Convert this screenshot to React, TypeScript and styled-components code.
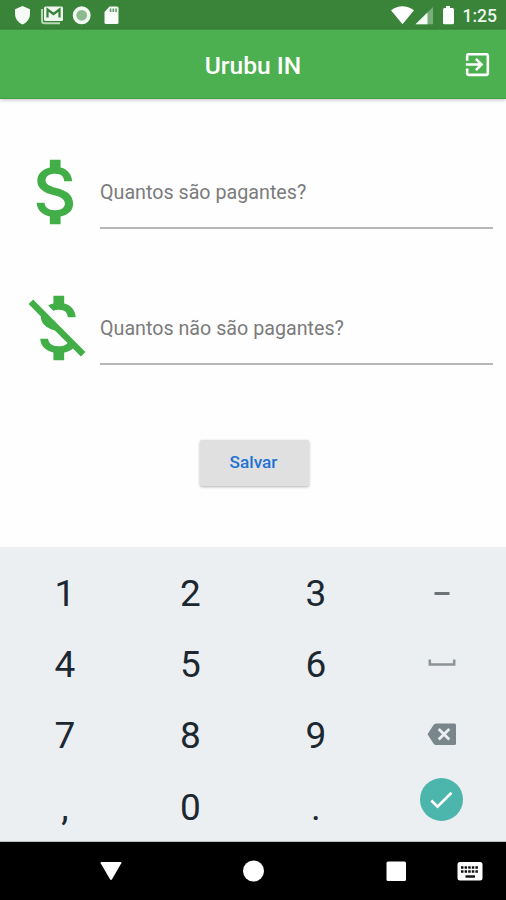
import React from 'react';
import styled, { createGlobalStyle } from 'styled-components';

const Global = createGlobalStyle`
  * { box-sizing: border-box; }
  body { margin: 0; background: #fff; }
  svg { display: block; flex: none; }
`;

const Screen = styled.div`
  width: 506px;
  height: 900px;
  display: flex;
  flex-direction: column;
  overflow: hidden;
  background: #fefefe;
  font-family: Roboto, sans-serif;
`;

const StatusBar = styled.div`
  flex: none;
  height: 30px;
  padding: 0 9px 0 14px;
  display: flex;
  align-items: center;
  justify-content: space-between;
  background: #398439;
  border-bottom: 1px solid #429746;
`;

const StatusRight = styled.div`
  display: flex;
  align-items: center;
  gap: 4px;
`;

const Clock = styled.span`
  padding-top: 2px;
  font-size: 17.5px;
  font-weight: 500;
  line-height: 30px;
  color: #eef6ee;
`;

const AppBar = styled.header`
  flex: none;
  position: relative;
  height: 69px;
  padding: 1px 13px 0 15px;
  display: grid;
  grid-template-columns: 31px 1fr 31px;
  align-items: center;
  background: #4caf50;
  border-bottom: 1px solid #40a045;
  box-shadow: 0 1px 4px rgba(0, 0, 0, 0.24);
`;

const Title = styled.h1`
  grid-column: 2;
  margin: 2px 2px 0 0;
  text-align: center;
  font-size: 24.6px;
  font-weight: 500;
  line-height: 30px;
  color: #fff;
`;

const Form = styled.main`
  flex: none;
  height: 448px;
  padding: 50px 13px 0 14px;
  display: flex;
  flex-direction: column;
`;

const Field = styled.label`
  height: 86px;
  margin-bottom: 49.5px;
  display: flex;
  align-items: flex-start;
`;

const Line = styled.span`
  flex: 1;
  height: 80px;
  padding-top: 29px;
  border-bottom: 2px solid #b7b7b7;
  font-size: 19.7px;
  line-height: 30px;
  color: #7b7b7b;
`;

const SaveButton = styled.button`
  align-self: center;
  width: 109px;
  height: 46px;
  margin: 20px 0 0 1px;
  padding: 0 1px 2px 0;
  border: 0;
  border-radius: 2px;
  background: #e0e0e0;
  box-shadow: 0 1px 3px rgba(0, 0, 0, 0.3);
  font: 500 17.2px/44px Roboto, sans-serif;
  color: #2272d3;
`;

const Keyboard = styled.div`
  flex: none;
  height: 295px;
  padding: 11px 1px 0 2px;
  display: grid;
  grid-template-columns: repeat(4, 125.6px);
  grid-template-rows: repeat(4, 71.2px);
  background: #eceff1;
  border-bottom: 1px solid #b9bcbd;
`;

const Key = styled.div`
  display: flex;
  align-items: center;
  justify-content: center;
  font-size: 37px;
  font-weight: 400;
  line-height: 71px;
  color: #1b2831;
`;

const Enter = styled.div`
  width: 43px;
  height: 43px;
  margin-bottom: 15px;
  border-radius: 50%;
  display: flex;
  align-items: center;
  justify-content: center;
  background: #4db6ac;
`;

const NavBar = styled.nav`
  flex: 1;
  display: flex;
  background: #000;
`;

const StatusIcons = () => (
  <svg width="108" height="30" viewBox="14 0 108 30">
    <path fill="#f6fbf6" d="M22.500 6 30 9.200V14q0 7-7.500 10.500Q15 21 15 14V9.200z" />
    <path fill="none" stroke="#b9d6b9" strokeWidth="2" d="M42 9v12q0 2.300 2.500 2.300H60" />
    <rect x="44" y="6.500" width="19" height="14.500" rx="1.500" fill="#edf6ed" />
    <path fill="none" stroke="#39813b" strokeWidth="2.200" d="M47.500 17.500v-8l6 4.500 6-4.500v8" />
    <circle cx="81.700" cy="15.300" r="7.200" fill="#8dbb8e" stroke="#f2f8f2" strokeWidth="3.600" />
    <path fill="#fafdfa" d="M109.500 6.500h7.500q1.500 0 1.500 1.500v14.500q0 1.500-1.500 1.500h-11q-1.500 0-1.500-1.500V12z" />
    <path stroke="#659e66" strokeWidth="1.700" d="M110.600 8.500v3.500M113.300 8.500v3.500M116 8.500v3.500" />
  </svg>
);

const SignalIcons = () => (
  <svg width="70" height="30" viewBox="388.500 0 70 30">
    <path fill="#fff" d="M390.500 10.300Q402 2.300 413.500 10.300L402 24.300z" />
    <path fill="#79ad7a" d="M432.500 7v17.300H415z" />
    <path fill="#f4faf4" d="M427 12.500v11.800H415z" />
    <path fill="#fff" d="M445.500 6h4v2h2.500q1.500 0 1.500 1.500v13.300q0 1.500-1.500 1.500h-8q-1.500 0-1.500-1.500V9.500q0-1.500 1.500-1.500h1.500z" />
  </svg>
);

const ExitIcon = () => (
  <svg width="31" height="31" viewBox="0 0 24 24" fill="#fff">
    <path d="M10.090 15.590L11.500 17l5-5-5-5-1.410 1.410L12.670 11H3v2h9.670l-2.580 2.590zM19 3H5c-1.110 0-2 .9-2 2v4h2V5h14v14H5v-4H3v4c0 1.100.89 2 2 2h14c1.100 0 2-.9 2-2V5c0-1.100-.9-2-2-2z" />
  </svg>
);

const MoneyIcon = () => (
  <svg width="86" height="86" viewBox="0 0 24 24" fill="#41ae48">
    <path d="M11.800 10.900c-2.270-.59-3-1.200-3-2.150 0-1.090 1.010-1.850 2.700-1.850 1.780 0 2.440.85 2.500 2.100h2.210c-.07-1.720-1.120-3.300-3.210-3.810V3h-3v2.160c-1.940.42-3.500 1.680-3.500 3.610 0 2.310 1.910 3.460 4.700 4.130 2.500.6 3 1.480 3 2.410 0 .69-.49 1.790-2.700 1.790-2.060 0-2.870-.92-2.980-2.100h-2.200c.12 2.190 1.760 3.420 3.680 3.830V21h3v-2.150c1.950-.37 3.500-1.500 3.500-3.550 0-2.840-2.430-3.810-4.700-4.400z" />
  </svg>
);

const MoneyOffIcon = () => (
  <svg width="86" height="86" viewBox="0 0 24 24" fill="#41ae48">
    <path d="M12.500 6.900c1.780 0 2.440.85 2.500 2.100h2.210c-.07-1.720-1.120-3.300-3.210-3.810V3h-3v2.160c-.53.12-1.030.3-1.480.54l1.470 1.470c.41-.17.91-.27 1.510-.27zM5.330 4.060L4.060 5.330 7.500 8.770c0 2.080 1.560 3.210 3.910 3.910l3.510 3.510c-.34.48-1.050.91-2.420.91-2.060 0-2.870-.92-2.980-2.100h-2.200c.12 2.190 1.760 3.420 3.680 3.830V21h3v-2.150c.96-.18 1.820-.55 2.450-1.120l2.220 2.220 1.270-1.270L5.330 4.060z" />
  </svg>
);

const MinusIcon = () => (
  <svg width="30" height="30" viewBox="0 0 30 30">
    <path stroke="#6c7477" strokeWidth="3" d="M7.500 14.500h15" />
  </svg>
);

const SpaceIcon = () => (
  <svg width="30" height="30" viewBox="0 0 30 30">
    <path fill="none" stroke="#8b9396" strokeWidth="2.500" d="M2.800 9.500v5h24.400v-5" />
  </svg>
);

const BackspaceIcon = () => (
  <svg width="30" height="28" viewBox="0 0 30 28">
    <path fill="#79868c" d="M9 1.500h18.500q1.500 0 1.500 1.500v18.500q0 1.500-1.500 1.500H9q-1.500 0-2.500-1.500L.500 12.300l6-9.300Q7.500 1.500 9 1.500z" />
    <path stroke="#eceff1" strokeWidth="2.800" d="M11.700 7l10.600 10.600M22.300 7L11.700 17.600" />
  </svg>
);

const CheckIcon = () => (
  <svg width="43" height="43" viewBox="0 0 43 43">
    <path fill="none" stroke="#fff" strokeWidth="2.700" d="M11.300 22.500l6.200 6.200L31.500 14.800" />
  </svg>
);

const NavIcons = () => (
  <svg width="506" height="58" viewBox="0 842 506 58" fill="#fff">
    <path d="M101.500 862h19q1.500 0 .8 1.300l-9.300 16q-1 1.500-2 0l-9.300-16q-.7-1.300.8-1.300z" />
    <circle cx="253.500" cy="871" r="10.500" />
    <rect x="386.500" y="861.500" width="19.500" height="19.500" rx="1.500" />
    <rect x="457.500" y="862" width="25" height="18.500" rx="2.500" />
    <path stroke="#111" strokeWidth="2.400" strokeDasharray="2.500 1.100" d="M461 867.500h18M461 871.500h18" />
    <path stroke="#111" strokeWidth="2.400" d="M465.500 876.500h9.500" />
  </svg>
);

const keys: React.ReactNode[] = [
  '1', '2', '3', <MinusIcon />,
  '4', '5', '6', <SpaceIcon />,
  '7', '8', '9', <BackspaceIcon />,
  ',', '0', '.', <Enter><CheckIcon /></Enter>,
];

export default function App() {
  return (
    <>
      <Global />
      <Screen>
        <StatusBar>
          <StatusIcons />
          <StatusRight>
            <SignalIcons />
            <Clock>1:25</Clock>
          </StatusRight>
        </StatusBar>
        <AppBar>
          <Title>Urubu IN</Title>
          <ExitIcon />
        </AppBar>
        <Form>
          <Field>
            <MoneyIcon />
            <Line>Quantos são pagantes?</Line>
          </Field>
          <Field>
            <MoneyOffIcon />
            <Line>Quantos não são pagantes?</Line>
          </Field>
          <SaveButton>Salvar</SaveButton>
        </Form>
        <Keyboard>
          {keys.map((key, i) => <Key key={i}>{key}</Key>)}
        </Keyboard>
        <NavBar>
          <NavIcons />
        </NavBar>
      </Screen>
    </>
  );
}
